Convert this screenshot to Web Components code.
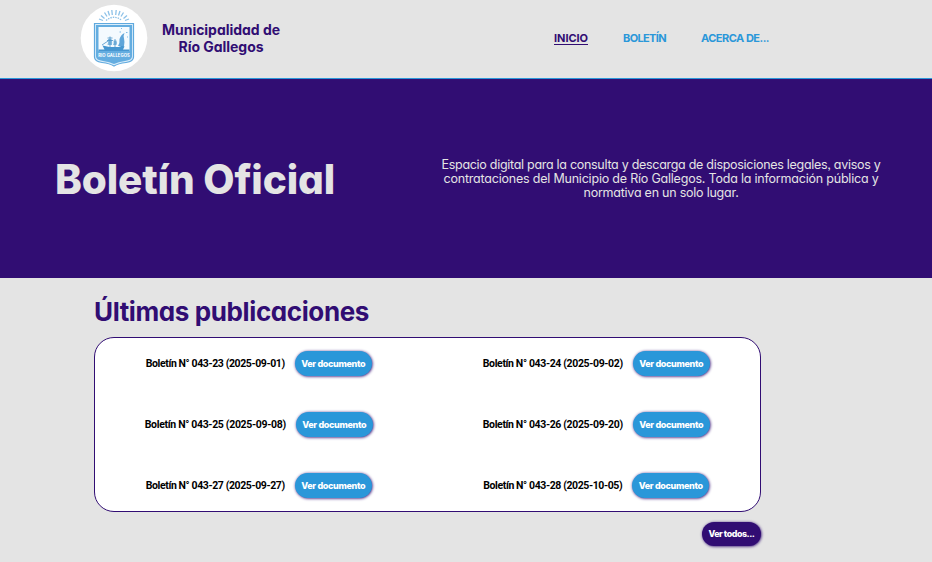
<!DOCTYPE html>
<html lang="es">
<head>
<meta charset="utf-8">
<title>Boletín Oficial</title>
<style>
html,body{margin:0;height:562px;overflow:hidden}
body{background:#e4e4e4;font-family:Inter,"Liberation Sans",sans-serif;font-feature-settings:"cv11","ss03";--violet:#310d73;--blue:#2a97d9}
</style>
</head>
<body>
<bulletin-page></bulletin-page>
<script>
function define(name, html, after) {
  const t = document.createElement('template');
  t.innerHTML = html;
  customElements.define(name, class extends HTMLElement {
    constructor() {
      super();
      this.attachShadow({ mode: 'open' }).appendChild(t.content.cloneNode(true));
    }
    connectedCallback() { if (after) after.call(this); }
  });
}

/* One line of text whose tracking is adjusted to fill its width attribute. */
define('fit-line', `<style>:host{display:block;white-space:nowrap}span{display:inline-block;white-space:nowrap}</style><span><slot></slot></span>`, function () {
  const s = this.shadowRoot.querySelector('span');
  const w = +this.getAttribute('width'), n = this.textContent.length;
  this.style.width = w + 'px';
  s.style.letterSpacing = (w - s.getBoundingClientRect().width) / n + 'px';
});

define('city-crest', `<style>:host{display:block;width:68px;height:68px}svg{display:block}</style>
<svg width="68" height="68" viewBox="0 0 68 68">
<circle cx="34" cy="34" r="33.3" fill="#fff"/>
<g stroke="#8cc1e8" stroke-width="1.300" fill="none">
<path d="M23 16.500l-4-1.500M24.500 14.500l-3.500-3M27 12.500l-2.500-4M29.500 11.500l-1.500-4.500M32.300 11l-.5-5M35.700 11l.5-5M38.500 11.500l1.500-4.500M41 12.500l2.500-4M43.500 14.500l3.500-3M45 16.500l4-1.500"/>
<path d="M26 16.500q8-6.500 16 0" stroke-dasharray="1.500 1"/></g>
<path d="M14.500 19.500H53.500V53Q53.500 57.500 46 58.500Q38 59.500 34 62Q30 59.500 22 58.500Q14.500 57.500 14.500 53Z" fill="#d9edfa" stroke="#5fa9de" stroke-width="1.200"/>
<path d="M16 21H52V52.500Q52 56 45 57Q38 58 34 60Q30 58 23 57Q16 56 16 52.500Z" fill="#64ade0"/>
<path d="M18.500 23H49.500V47H18.500Z" fill="#f4fafe"/>
<path d="M18.500 47v-1.500h6l-2-4 7 1.500h9l4-1.500 2 1-1.500 3h6.500v1.500Z" fill="#4696d0"/>
<path d="M27.500 41q1-3 .5-6h3.500q1 3 .5 6ZM33 41q1-2.500.5-4.500h3q1 2.500 0 4.500Z" fill="#82b9e0"/>
<path d="M38 42q2-2.500 1.500-7 1.500-4.500 5-6-1.500 3-.5 5.500 1 4 0 7.500Z" fill="#5fa5d9"/>
<path d="M22 41l6-4M30 43V32.500M35 43v-8M27 36.500h6M27.500 34h5" stroke="#4a93c8" stroke-width=".8"/>
<path d="M39.500 28h1.500M41 24.500h1M46 28.500h1.500M47 33h1" stroke="#7dbae7" stroke-width="1.200"/>
<text x="34" y="52.500" text-anchor="middle" textLength="31.500" font-family="Inter,sans-serif" font-weight="700" font-size="4.200" fill="#fff">RIO GALLEGOS</text></svg>`);

define('site-header', `<style>
:host{display:flex;box-sizing:border-box;height:79px;border-bottom:1px solid var(--blue);padding-left:80px}
city-crest{margin-top:4px}
.brand{width:118px;margin:21px 0 0 14px;color:var(--violet);font-weight:700;font-size:14px;line-height:17px}
.brand fit-line{margin:0 auto}
nav{display:flex;gap:35px;margin:32px 0 0 274px;font-weight:700;font-size:11px;line-height:12px;color:var(--blue)}
.on{color:var(--violet);border-bottom:1px solid;height:12px}
</style><city-crest></city-crest><div class="brand"><fit-line width="118">Municipalidad de</fit-line><fit-line width="85">Río Gallegos</fit-line></div>
<nav><fit-line class="on" width="34">INICIO</fit-line><fit-line width="43">BOLETÍN</fit-line><fit-line width="68">ACERCA DE...</fit-line></nav>`);

define('site-hero', `<style>
:host{display:flex;height:199px;background:var(--violet);color:#e4e4e4}
h1{font-size:40.5px;line-height:50px;margin:76px 0 0 55px;font-weight:800;width:280px}
.intro{margin:79px 0 0 106px;width:440px;font-size:12.5px;line-height:14px}
.intro fit-line{margin:0 auto}
</style><h1><fit-line width="280">Boletín Oficial</fit-line></h1>
<div class="intro"><fit-line width="439">Espacio digital para la consulta y descarga de disposiciones legales, avisos y</fit-line><fit-line width="435">contrataciones del Municipio de Río Gallegos. Toda la información pública y</fit-line><fit-line width="155">normativa en un solo lugar.</fit-line></div>`);

define('pill-button', `<style>
:host{display:flex;align-items:center;justify-content:center;box-sizing:border-box;width:77px;height:25px;border-radius:13px;background:var(--pill,var(--blue));color:#fff;font-size:9px;font-weight:800;line-height:12px;box-shadow:.5px .5px 3px var(--violet)}
</style><slot></slot>`);

define('bulletin-row', `<style>
:host{display:flex;align-items:center;justify-content:center;gap:10px;height:25px}
.label{font:700 10.5px/13px Roboto,"Liberation Sans",sans-serif;color:#000}
</style><fit-line class="label"></fit-line><pill-button><fit-line width="64">Ver documento</fit-line></pill-button>`, function () {
  const old = this.shadowRoot.querySelector('.label');
  const line = document.createElement('fit-line');
  line.className = 'label';
  line.textContent = this.getAttribute('label');
  line.setAttribute('width', this.getAttribute('width'));
  old.replaceWith(line);
});

define('bulletin-list', `<style>
:host{display:block;padding:18px 0 0 94px;width:668px}
h2{margin:0;font-size:26px;line-height:32px;color:var(--violet);font-weight:700}
.box{display:grid;grid-template-columns:1fr 1fr;column-gap:10px;row-gap:36px;box-sizing:border-box;width:667px;height:175px;margin-top:9px;padding-top:13px;border:1px solid var(--violet);border-radius:20px;background:#fff;align-content:start}
.all{--pill:var(--violet);width:59px;height:24px;margin:10px 0 0 608px}
.all fit-line{font-size:8.8px}
</style><h2><fit-line width="275">Últimas publicaciones</fit-line></h2>
<div class="box">
<bulletin-row width="139" label="Boletín N° 043-23 (2025-09-01)"></bulletin-row><bulletin-row width="140" label="Boletín N° 043-24 (2025-09-02)"></bulletin-row>
<bulletin-row width="141" label="Boletín N° 043-25 (2025-09-08)"></bulletin-row><bulletin-row width="140" label="Boletín N° 043-26 (2025-09-20)"></bulletin-row>
<bulletin-row width="139" label="Boletín N° 043-27 (2025-09-27)"></bulletin-row><bulletin-row width="139" label="Boletín N° 043-28 (2025-10-05)"></bulletin-row>
</div><pill-button class="all"><fit-line width="46">Ver todos...</fit-line></pill-button>`);

define('bulletin-page', `<style>:host{display:block;width:932px;height:562px;overflow:hidden}</style><site-header></site-header><site-hero></site-hero><bulletin-list></bulletin-list>`);
</script>
</body>
</html>
